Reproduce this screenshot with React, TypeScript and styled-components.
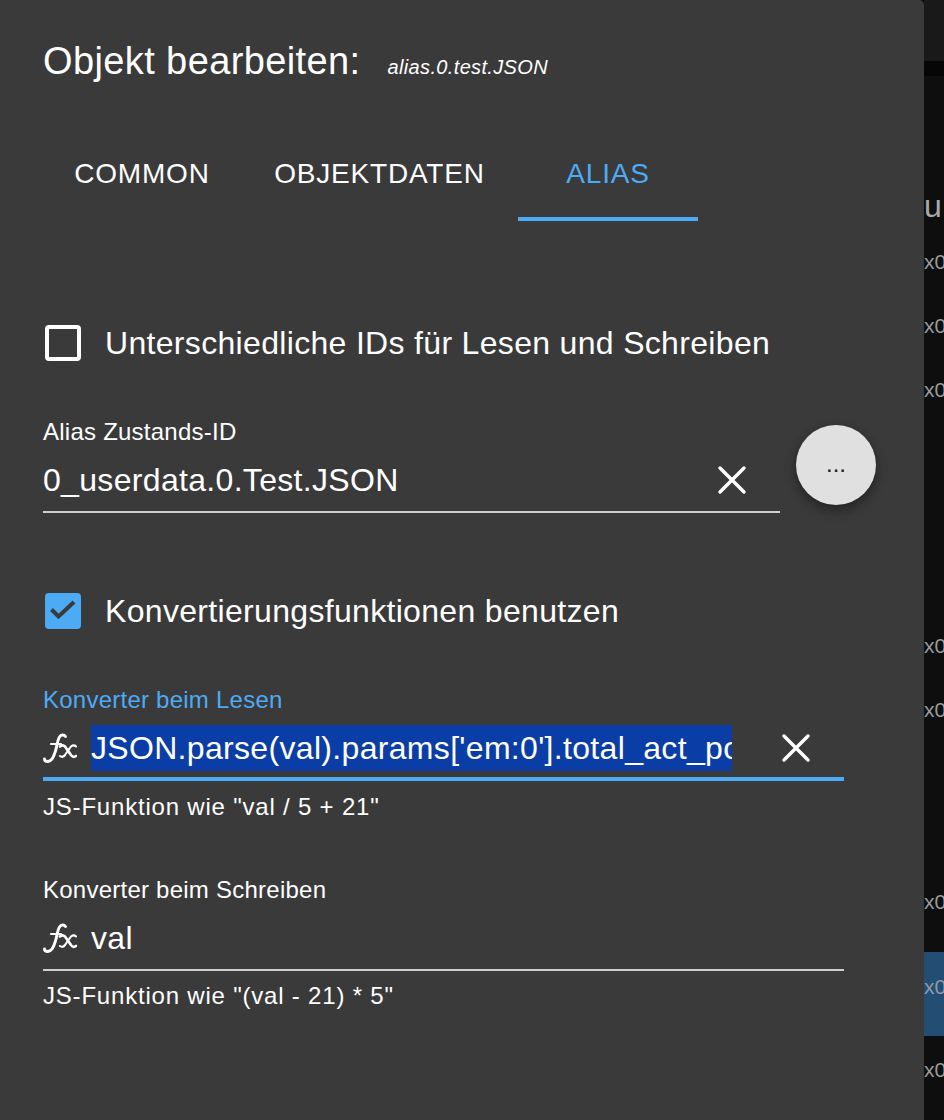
import React from 'react';
import styled, { createGlobalStyle } from 'styled-components';

const GlobalStyle = createGlobalStyle`
  html, body {
    margin: 0;
    padding: 0;
    height: 100%;
    background: #0e0e0e;
    overflow: hidden;
  }
`;

const Page = styled.div`
  display: flex;
  width: 944px;
  height: 1120px;
  overflow: hidden;
  font-family: 'Liberation Sans', Arial, sans-serif;
  background: #0e0e0e;
`;

const Dialog = styled.div`
  flex: 0 0 924px;
  height: 1120px;
  background: #3a3a3a;
  border-top-right-radius: 5px;
  color: #fff;
  padding: 0 0 0 43px;
  box-sizing: border-box;
`;

const Behind = styled.div`
  flex: 0 0 20px;
  display: flex;
  flex-direction: column;
  overflow: hidden;
`;

const BehindTop = styled.div`
  height: 61px;
  background: #191919;
`;

const BehindShade = styled.div`
  height: 15px;
  background: #060606;
`;

const BehindHead = styled.div`
  margin-top: 113px;
  height: 34px;
  line-height: 34px;
  font-size: 32px;
  color: #a9a9a9;
  white-space: nowrap;
`;

const BehindRow = styled.div<{ $top: number; $selected?: boolean }>`
  margin-top: ${(p) => p.$top}px;
  height: ${(p) => (p.$selected ? 84 : 28)}px;
  line-height: ${(p) => (p.$selected ? 70 : 28)}px;
  font-size: 21px;
  white-space: nowrap;
  color: ${(p) => (p.$selected ? '#8f9aa6' : '#9a9a9a')};
  background: ${(p) => (p.$selected ? '#244d74' : 'transparent')};
`;

const Title = styled.div`
  display: flex;
  align-items: baseline;
  padding-top: 39px;
  height: 44px;
  line-height: 44px;
  font-size: 38px;
  letter-spacing: 0.39px;
`;

const TitleId = styled.span`
  margin-left: 27px;
  font-size: 20px;
  letter-spacing: 0.35px;
  font-style: italic;
`;

const Tabs = styled.div`
  display: flex;
  margin-top: 41px;
  height: 97px;
`;

const Tab = styled.div<{ $active?: boolean; $width: number }>`
  box-sizing: border-box;
  width: ${(p) => p.$width}px;
  height: 97px;
  padding-top: 28px;
  line-height: 44px;
  text-align: center;
  font-size: 28px;
  letter-spacing: 0.8px;
  color: ${(p) => (p.$active ? '#4dabf5' : '#fff')};
  border-bottom: 4px solid ${(p) => (p.$active ? '#4dabf5' : 'transparent')};
`;

const CheckRow = styled.label<{ $top: number }>`
  display: flex;
  align-items: center;
  height: 44px;
  margin-top: ${(p) => p.$top}px;
  font-size: 32px;
  letter-spacing: 0.32px;
  gap: 24px;
`;

const BoxEmpty = styled.span`
  box-sizing: border-box;
  width: 36px;
  height: 36px;
  border: 4px solid #fff;
  border-radius: 4px;
  margin-left: 2px;
`;

const BoxChecked = styled.span`
  display: flex;
  align-items: center;
  justify-content: center;
  width: 36px;
  height: 36px;
  background: #4dabf5;
  border-radius: 4px;
  margin-left: 2px;
`;

const Field = styled.div<{ $top: number; $width: number }>`
  width: ${(p) => p.$width}px;
  margin-top: ${(p) => p.$top}px;
`;

const FieldLabel = styled.div<{ $focused?: boolean }>`
  height: 32px;
  line-height: 32px;
  font-size: 24px;
  letter-spacing: 0.24px;
  color: ${(p) => (p.$focused ? '#4dabf5' : '#fff')};
`;

const InputRow = styled.div<{ $focused?: boolean; $pad: number }>`
  display: flex;
  align-items: center;
  box-sizing: border-box;
  height: 65px;
  padding-top: ${(p) => p.$pad}px;
  border-bottom: ${(p) => (p.$focused ? '4px solid #4dabf5' : '2px solid #cfcfcf')};
  font-size: 32px;
  letter-spacing: 0.32px;
`;

const FxIcon = styled.svg`
  flex: 0 0 34px;
  width: 34px;
  height: 34px;
  margin-right: 14px;
`;

const InputText = styled.div`
  flex: 1;
  min-width: 0;
  overflow: hidden;
  white-space: nowrap;
  line-height: 46px;
`;

const Selected = styled.span`
  display: block;
  overflow: hidden;
  background: #0a3ea6;
  height: 46px;
`;

const ClearIcon = styled.svg<{ $gap: number }>`
  flex: 0 0 32px;
  width: 32px;
  height: 32px;
  margin-left: ${(p) => p.$gap}px;
  margin-right: 32px;
`;

const Helper = styled.div<{ $top: number }>`
  margin-top: ${(p) => p.$top}px;
  height: 32px;
  line-height: 32px;
  font-size: 24px;
  letter-spacing: 0.8px;
`;

const IdRow = styled.div`
  display: flex;
  align-items: flex-start;
  margin-top: 51px;
`;

const DotsButton = styled.button`
  width: 80px;
  height: 80px;
  margin: 9px 0 0 16px;
  padding: 0 0 2px;
  border: none;
  border-radius: 50%;
  background: #e0e0e0;
  color: #222;
  font-family: inherit;
  font-size: 24px;
  box-shadow: 0 6px 12px rgba(0, 0, 0, 0.28), 0 2px 10px rgba(0, 0, 0, 0.16);
`;

const Fx = () => (
  <FxIcon viewBox="0 0 34 34" fill="none" stroke="#fff" strokeLinecap="round">
    <path d="M22.500 5.500c-1.500-2-4.500-2-6 .5-2 3-2.500 9-4 14-1.500 5-3.500 10.500-7.500 10.500-2 0-3.500-1-3.500-2.500" strokeWidth="2.900" />
    <path d="M8 13h10" strokeWidth="2.200" />
    <path d="M17 15.500c2-1.500 3.500-1.500 5 0l6 8.500c1.500 2 3 2.500 5 1" strokeWidth="2.700" />
    <path d="M33 15.500c-1.500-1.500-3-1.500-5 0l-6 8.500c-1.500 2-3 2.500-5 1" strokeWidth="2.100" />
  </FxIcon>
);

const Clear = ({ gap }: { gap: number }) => (
  <ClearIcon $gap={gap} viewBox="0 0 32 32" fill="none" stroke="#fff" strokeWidth="3.400" strokeLinecap="round">
    <path d="M4 4l24 24M28 4L4 28" />
  </ClearIcon>
);

export default function App() {
  return (
    <>
      <GlobalStyle />
      <Page>
        <Dialog>
          <Title>
            Objekt bearbeiten:
            <TitleId>alias.0.test.JSON</TitleId>
          </Title>
          <Tabs>
            <Tab $width={198}>COMMON</Tab>
            <Tab $width={277}>OBJEKTDATEN</Tab>
            <Tab $width={180} $active>ALIAS</Tab>
          </Tabs>
          <CheckRow $top={100}>
            <BoxEmpty />
            Unterschiedliche IDs für Lesen und Schreiben
          </CheckRow>
          <IdRow>
            <Field $top={0} $width={737}>
              <FieldLabel>Alias Zustands-ID</FieldLabel>
              <InputRow $pad={1}>
                <InputText>0_userdata.0.Test.JSON</InputText>
                <Clear gap={0} />
              </InputRow>
            </Field>
            <DotsButton>...</DotsButton>
          </IdRow>
          <CheckRow $top={76}>
            <BoxChecked>
              <svg width="30" height="30" viewBox="0 0 30 30" fill="none" stroke="#3a3a3a" strokeWidth="4">
                <path d="M3.500 13.500l7 7L26 6" />
              </svg>
            </BoxChecked>
            Konvertierungsfunktionen benutzen
          </CheckRow>
          <Field $top={51} $width={801}>
            <FieldLabel $focused>Konverter beim Lesen</FieldLabel>
            <InputRow $focused $pad={3}>
              <Fx />
              <InputText>
                <Selected>JSON.parse(val).params['em:0'].total_act_power</Selected>
              </InputText>
              <Clear gap={48} />
            </InputRow>
            <Helper $top={10}>JS-Funktion wie "val / 5 + 21"</Helper>
          </Field>
          <Field $top={51} $width={801}>
            <FieldLabel>Konverter beim Schreiben</FieldLabel>
            <InputRow $pad={1}>
              <Fx />
              <InputText>val</InputText>
            </InputRow>
            <Helper $top={9}>JS-Funktion wie "(val - 21) * 5"</Helper>
          </Field>
        </Dialog>
        <Behind>
          <BehindTop />
          <BehindShade />
          <BehindHead>u</BehindHead>
          <BehindRow $top={25}>x0</BehindRow>
          <BehindRow $top={36}>x0</BehindRow>
          <BehindRow $top={36}>x0</BehindRow>
          <BehindRow $top={228}>x0</BehindRow>
          <BehindRow $top={36}>x0</BehindRow>
          <BehindRow $top={164}>x0</BehindRow>
          <BehindRow $top={36} $selected>x0</BehindRow>
          <BehindRow $top={20}>x0</BehindRow>
        </Behind>
      </Page>
    </>
  );
}
